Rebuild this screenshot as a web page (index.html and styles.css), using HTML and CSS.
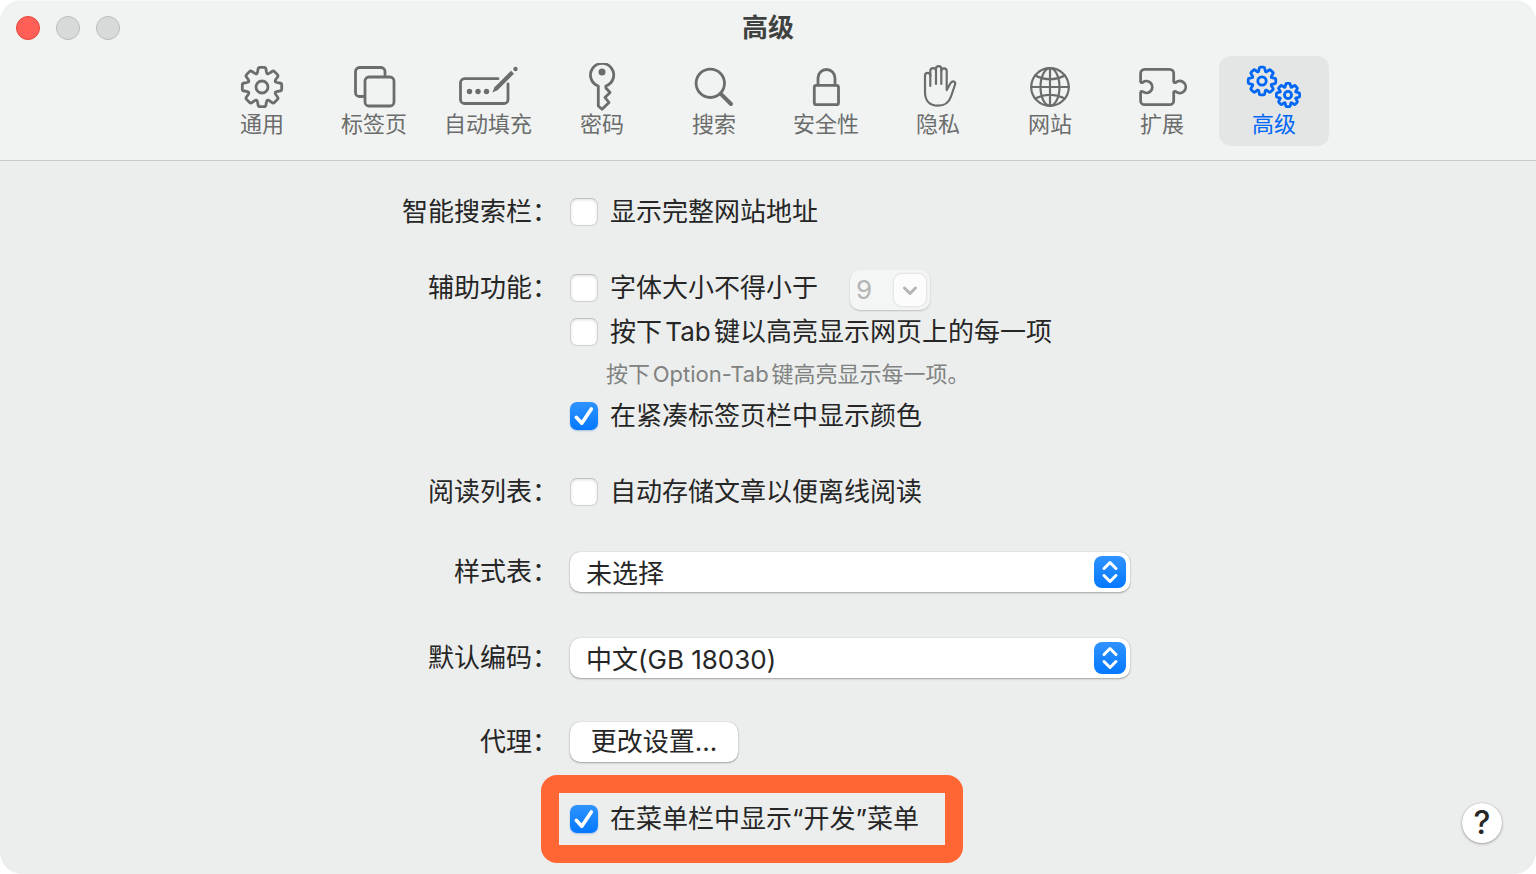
FILE: index.html
```html
<!DOCTYPE html>
<html lang="zh-CN">
<head>
  <meta charset="UTF-8">
  <meta name="viewport" content="width=device-width, initial-scale=1.0">
  <title>高级</title>
  <link rel="stylesheet" href="styles.css">
</head>
<body>
  <!-- shared gear shape: one tooth, repeated every 45 degrees -->
  <svg class="defs" aria-hidden="true">
    <defs>
      <path id="tooth" vector-effect="non-scaling-stroke" d="M-5.5-13.3C-4.6-13.7-4.5-14.4-4.3-15.6L-4-17.8Q-3.7-19.7-2.2-19.7H2.2Q3.7-19.7 4-17.8L4.3-15.6C4.5-14.4 4.6-13.7 5.5-13.3"/>
      <g id="gear">
        <use href="#tooth"/>
        <use href="#tooth" transform="rotate(45)"/>
        <use href="#tooth" transform="rotate(90)"/>
        <use href="#tooth" transform="rotate(135)"/>
        <use href="#tooth" transform="rotate(180)"/>
        <use href="#tooth" transform="rotate(225)"/>
        <use href="#tooth" transform="rotate(270)"/>
        <use href="#tooth" transform="rotate(315)"/>
        <circle r="6" vector-effect="non-scaling-stroke"/>
      </g>
    </defs>
  </svg>

  <div class="window">
    <header class="header">
      <div class="titlebar">
        <div class="lights">
          <button class="light close" aria-label="关闭"></button>
          <button class="light" aria-label="最小化" disabled></button>
          <button class="light" aria-label="缩放" disabled></button>
        </div>
        <h1 class="title">高级</h1>
      </div>

      <nav class="toolbar">
        <button class="tab">
          <svg class="icon" viewBox="0 0 60 48"><use href="#gear" transform="translate(30 24)"/></svg>
          <span>通用</span>
        </button>
        <button class="tab">
          <svg class="icon" viewBox="0 0 60 48">
            <rect x="21" y="14" width="29" height="29" rx="4"/>
            <path d="M19.5 33.5h-4a4 4 0 0 1-4-4V8.5a4 4 0 0 1 4-4H37a4 4 0 0 1 4 4V12"/>
          </svg>
          <span>标签页</span>
        </button>
        <button class="tab">
          <svg class="icon" viewBox="0 0 60 48">
            <path d="M40 15.7H6.5a4 4 0 0 0-4 4V36.5a4 4 0 0 0 4 4H46a4 4 0 0 0 4-4V21"/>
            <g class="solid">
              <circle cx="11.5" cy="28.5" r="2.7"/>
              <circle cx="20" cy="28.5" r="2.7"/>
              <circle cx="28.5" cy="28.5" r="2.7"/>
              <circle cx="57.5" cy="6" r="2.2"/>
              <path d="M34.3 29.5L36.5 24.3L53 7.7L56 10.7L39.5 27.2Z"/>
            </g>
          </svg>
          <span>自动填充</span>
        </button>
        <button class="tab">
          <svg class="icon" viewBox="0 0 60 48">
            <path d="M26.3 23A11.6 11.6 0 1 1 33.9 23V25L38 29.5L33 34.5L37 39.5L30 46.2L26.3 43Z"/>
            <circle class="solid" cx="30" cy="9" r="3.5"/>
          </svg>
          <span>密码</span>
        </button>
        <button class="tab">
          <svg class="icon" viewBox="0 0 60 48">
            <circle cx="26.3" cy="20.3" r="14.2"/>
            <path class="thick" d="M36.8 30.8L47 41"/>
          </svg>
          <span>搜索</span>
        </button>
        <button class="tab">
          <svg class="icon" viewBox="0 0 60 48">
            <rect x="18.3" y="22.3" width="24.2" height="19.4" rx="2"/>
            <path d="M22 22V15a8.5 8.5 0 0 1 17 0V22"/>
          </svg>
          <span>安全性</span>
        </button>
        <button class="tab">
          <svg class="icon thin" viewBox="0 0 60 48">
            <path d="M22.3 23V12.5a2.65 2.65 0 0 0-5.3 0V29C17 38 22 42.7 30 42.7C36 42.7 41 39.5 43 33.5L46.9 22c.5-1.5.5-2.6-.6-3.3c-1.4-.7-2.9-.1-4 1.8L38.7 27V8a2.7 2.7 0 0 0-5.4 0V21"/>
            <path d="M22.3 13V8a2.85 2.85 0 0 1 5.7 0V21M28 8V5.7a2.65 2.65 0 0 1 5.3 0V8"/>
          </svg>
          <span>隐私</span>
        </button>
        <button class="tab">
          <svg class="icon thin" viewBox="0 0 60 48">
            <circle cx="30" cy="24" r="18.8"/>
            <ellipse cx="30" cy="24" rx="9.5" ry="18.8"/>
            <path d="M30 5V43M11 24H49M15 12.5Q30 20 45 12.5M15 35.5Q30 28 45 35.5"/>
          </svg>
          <span>网站</span>
        </button>
        <button class="tab">
          <svg class="icon" viewBox="0 0 60 48">
            <path d="M8.6 18.5V10.3a4 4 0 0 1 4-4H37.7a4 4 0 0 1 4 4V18.5c0 1.3 1.3 1.5 2.3.8a6 6 0 1 1 0 9.4c-1-.7-2.3-.5-2.3.8V37.7a4 4 0 0 1-4 4H12.6a4 4 0 0 1-4-4V29.5c0-1.3 1.2-1.5 2.2-.8a5.9 5.9 0 1 0 0-9.4c-1 .7-2.2.5-2.2-.8Z"/>
          </svg>
          <span>扩展</span>
        </button>
        <button class="tab active">
          <svg class="icon" viewBox="0 0 60 48">
            <use href="#gear" transform="translate(18 18) scale(.7)"/>
            <use href="#gear" transform="translate(44 32) scale(.59)"/>
          </svg>
          <span>高级</span>
        </button>
      </nav>
    </header>

    <form class="settings">
      <div class="row">
        <div class="row-label">智能搜索栏：</div>
        <div class="fields">
          <label class="check"><input type="checkbox">显示完整网站地址</label>
        </div>
      </div>

      <div class="row">
        <div class="row-label">辅助功能：</div>
        <div class="fields">
          <div class="inline">
            <label class="check"><input type="checkbox">字体大小不得小于</label>
            <div class="combo">
              <input type="text" value="9" aria-label="最小字体大小" disabled>
              <button type="button" aria-label="选择字体大小" disabled>
                <svg viewBox="0 0 32 32"><path d="M10.5 14L16 19.5L21.5 14"/></svg>
              </button>
            </div>
          </div>
          <label class="check"><input type="checkbox">按下Tab键以高亮显示网页上的每一项</label>
          <p class="hint">按下Option-Tab键高亮显示每一项。</p>
          <label class="check"><input type="checkbox" checked>在紧凑标签页栏中显示颜色</label>
        </div>
      </div>

      <div class="row">
        <div class="row-label">阅读列表：</div>
        <div class="fields">
          <label class="check"><input type="checkbox">自动存储文章以便离线阅读</label>
        </div>
      </div>

      <div class="row row-popup">
        <label class="row-label" for="stylesheet">样式表：</label>
        <div class="popup">
          <select id="stylesheet"><option>未选择</option></select>
          <svg class="arrows" viewBox="0 0 32 32"><path d="M10 12.5L16 6.5L22 12.5M10 19.5L16 25.5L22 19.5"/></svg>
        </div>
      </div>

      <div class="row row-popup">
        <label class="row-label" for="encoding">默认编码：</label>
        <div class="popup">
          <select id="encoding"><option>中文(GB 18030)</option></select>
          <svg class="arrows" viewBox="0 0 32 32"><path d="M10 12.5L16 6.5L22 12.5M10 19.5L16 25.5L22 19.5"/></svg>
        </div>
      </div>

      <div class="row row-proxy">
        <label class="row-label" for="proxy">代理：</label>
        <div class="fields">
          <button type="button" class="push" id="proxy">更改设置...</button>
        </div>
      </div>

      <div class="row row-last">
        <div class="fields">
          <div class="highlight">
            <label class="check"><input type="checkbox" checked>在菜单栏中显示“开发”菜单</label>
          </div>
        </div>
        <button type="button" class="help" aria-label="帮助">?</button>
      </div>
    </form>
  </div>
</body>
</html>
```

FILE: styles.css
```css
* {
  box-sizing: border-box;
}

body {
  margin: 0;
  background: #fff;
  color: #262626;
  font-family: Inter, "Noto Sans CJK SC", sans-serif;
  font-size: 26px;
  line-height: 44px;
  text-autospace: normal;
}

button,
input,
select {
  font: inherit;
  color: inherit;
  margin: 0;
}

.defs {
  display: block;
  width: 0;
  height: 0;
}

.window {
  min-height: 100vh;
  background: #eceeed;
  border-radius: 22px;
  overflow: hidden;
}

/* Header */
.header {
  background: #f1f3f2;
  border-bottom: 1px solid #c6c9c8;
  box-shadow: inset 0 1px 0 #f8faf9;
  padding-bottom: 14px;
}

.titlebar {
  display: grid;
  grid-template-columns: 1fr auto 1fr;
  align-items: center;
  height: 56px;
  padding: 0 16px;
}

.lights {
  display: flex;
  gap: 16px;
}

.light {
  width: 24px;
  height: 24px;
  padding: 0;
  border: 1px solid #b9bbba;
  border-radius: 50%;
  background: #d8dad9;
}

.close {
  background: #ff5f57;
  border-color: #e2443d;
}

.title {
  margin: 0;
  font-size: 26px;
  font-weight: 700;
  color: #404241;
}

.toolbar {
  display: flex;
  justify-content: center;
  gap: 2px;
}

.tab {
  display: flex;
  flex-direction: column;
  align-items: center;
  min-width: 110px;
  height: 90px;
  padding: 7px 13px;
  border: none;
  border-radius: 12px;
  background: none;
  color: #6b6d6c;
  font-size: 22px;
  line-height: 26px;
}

.active {
  background: #e4e6e5;
  color: #0066f5;
}

.icon {
  width: 60px;
  height: 48px;
  fill: none;
  stroke: currentColor;
  stroke-width: 2.8;
  stroke-linecap: round;
  stroke-linejoin: round;
}

.thin {
  stroke-width: 2.2;
}

.thick {
  stroke-width: 4;
}

.solid {
  fill: currentColor;
  stroke: none;
}

/* Settings */
.settings {
  padding-top: 29px;
}

.row {
  display: grid;
  grid-template-columns: 1fr 560px 1fr;
  padding-left: 164px;
  margin-bottom: 32px;
}

.row-label {
  padding-right: 12px;
  text-align: right;
}

.fields {
  grid-column: 2;
}

.inline {
  display: flex;
  align-items: center;
  justify-content: space-between;
  width: 360px;
  height: 44px;
}

.check {
  display: flex;
  align-items: center;
  gap: 12px;
  white-space: nowrap;
}

.check input {
  appearance: none;
  flex: none;
  width: 28px;
  height: 28px;
  border: 1px solid #cfd1d0;
  border-top-color: #bfc1c0;
  border-radius: 7px;
  background: #fff;
  box-shadow: inset 0 1px 3px rgba(0, 0, 0, 0.12);
}

.check input:checked {
  border: none;
  background: url("data:image/svg+xml,%3Csvg xmlns='http://www.w3.org/2000/svg' viewBox='0 0 28 28'%3E%3Cpath d='M6.3 15.3L11.8 21.2L21.3 7' fill='none' stroke='white' stroke-width='3.6' stroke-linecap='round' stroke-linejoin='round'/%3E%3C/svg%3E"), linear-gradient(#2f93ff, #0478ff);
  box-shadow: 0 1px 2px rgba(0, 90, 220, 0.3);
}

.hint {
  margin: 0;
  padding-left: 36px;
  font-size: 22px;
  line-height: 40px;
  color: #808281;
}

.combo {
  display: flex;
  align-items: center;
  width: 80px;
  height: 40px;
  margin-top: 4px;
  padding: 0 4px 0 6px;
  border-radius: 10px;
  background: #f4f6f5;
  box-shadow: 0 1px 2px rgba(0, 0, 0, 0.2);
}

.combo input {
  flex: 1;
  min-width: 0;
  height: 36px;
  padding: 0;
  border: none;
  background: none;
  color: #b3b5b4;
}

.combo button {
  width: 32px;
  height: 32px;
  padding: 0;
  border: none;
  border-radius: 8px;
  background: #fcfcfc;
  box-shadow: 0 0 3px rgba(0, 0, 0, 0.16);
}

.combo svg {
  display: block;
  fill: none;
  stroke: #b3b5b4;
  stroke-width: 3;
  stroke-linecap: round;
  stroke-linejoin: round;
}

.row-popup {
  padding-top: 4px;
  padding-bottom: 6px;
}

.popup {
  position: relative;
  padding: 2px 0;
}

.popup select,
.push {
  appearance: none;
  display: block;
  height: 40px;
  border: none;
  border-radius: 10px;
  background: #fff;
  box-shadow: 0 0 1px rgba(0, 0, 0, 0.3), 0 1px 2px rgba(0, 0, 0, 0.3);
}

.popup select {
  width: 100%;
  padding: 0 48px 4px 16px;
}

.arrows {
  position: absolute;
  top: 6px;
  right: 4px;
  width: 32px;
  height: 32px;
  border-radius: 8px;
  background: linear-gradient(#2f93ff, #0478ff);
  fill: none;
  stroke: #fff;
  stroke-width: 3;
  stroke-linecap: round;
  stroke-linejoin: round;
  pointer-events: none;
}

.row-proxy {
  padding-top: 2px;
  margin-bottom: 11px;
}

.push {
  min-width: 168px;
  margin: 2px 0;
  padding: 0 20px;
  line-height: 40px;
  text-autospace: no-autospace;
}

.row-last {
  align-items: end;
  margin-bottom: 11px;
}

.highlight {
  width: 422px;
  margin-left: -29px;
  padding: 4px 11px;
  border: 18px solid #ff6633;
  border-radius: 16px;
}

.help {
  justify-self: end;
  width: 40px;
  height: 40px;
  margin: 0 34px 20px 0;
  padding: 0;
  border: none;
  border-radius: 50%;
  background: #fff;
  box-shadow: 0 0 1px rgba(0, 0, 0, 0.3), 0 1px 3px rgba(0, 0, 0, 0.3);
  font-size: 32px;
  font-weight: 500;
  line-height: 40px;
}
```
